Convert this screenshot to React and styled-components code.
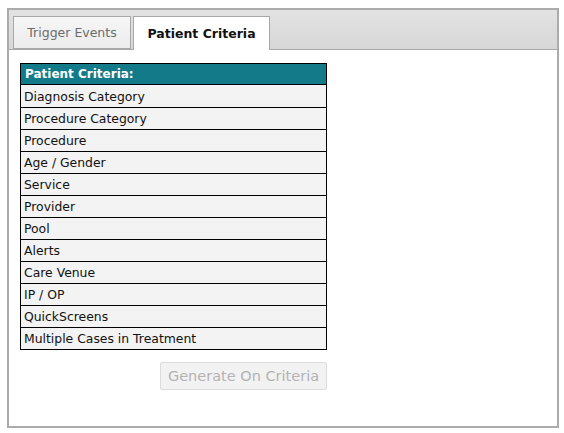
import React from "react";
import styled, { createGlobalStyle } from "styled-components";

const Global = createGlobalStyle`
  body {
    margin: 0;
    background: #fff;
    font-family: "DejaVu Sans", Verdana, sans-serif;
  }
`;

const Frame = styled.div`
  margin: 8px 0 0 7px;
  width: 548px;
  height: 416px;
  border: 2px solid #ababab;
  background: #fff;
  display: flex;
  flex-direction: column;
`;

const TabStrip = styled.div`
  height: 40px;
  box-sizing: border-box;
  padding: 0 0 0 4px;
  display: flex;
  align-items: flex-end;
  gap: 2px;
  background: linear-gradient(#e2e2e2, #d7d7d7);
  border-bottom: 1px solid #a8a8a8;
`;

const Tab = styled.div`
  height: ${(p) => (p.$active ? "34px" : "33px")};
  margin-bottom: ${(p) => (p.$active ? "-1px" : "0")};
  box-sizing: border-box;
  display: flex;
  align-items: center;
  justify-content: center;
  white-space: nowrap;
  border: 1px solid #a8a8a8;
  border-bottom: ${(p) => (p.$active ? "none" : "1px solid #a8a8a8")};
  background: ${(p) => (p.$active ? "#fff" : "linear-gradient(#f6f6f6, #ececec)")};
  color: ${(p) => (p.$active ? "#111" : "#6b6b6b")};
  font-family: "DejaVu Sans", Verdana, sans-serif;
  font-size: 12.5px;
  font-weight: ${(p) => (p.$active ? "bold" : "normal")};
  width: ${(p) => p.$w}px;
`;

const Body = styled.div`
  padding: 13px 0 0 11px;
  display: flex;
  flex-direction: column;
`;

const Table = styled.div`
  width: 307px;
  box-sizing: border-box;
  border: 1px solid #000;
  display: flex;
  flex-direction: column;
`;

const HeadCell = styled.div`
  height: 21px;
  box-sizing: border-box;
  padding: 0 4px;
  display: flex;
  align-items: center;
  background: #127a88;
  color: #fff;
  font-weight: bold;
  font-size: 12px;
  border-bottom: 1px solid #000;
`;

const Row = styled.div`
  height: 22px;
  box-sizing: border-box;
  padding: 0 3px;
  display: flex;
  align-items: center;
  background: #f3f3f3;
  color: #111;
  font-size: 12.4px;
  border-top: ${(p) => (p.$first ? "none" : "1px solid #000")};
`;

const Actions = styled.div`
  width: 307px;
  display: flex;
  justify-content: flex-end;
  padding-top: 12px;
`;

const Button = styled.button`
  width: 167px;
  height: 28px;
  box-sizing: border-box;
  border: 1px solid #dcdcdc;
  border-radius: 2px;
  background: #f2f2f2;
  color: #b3b3b3;
  font-family: "DejaVu Sans", Verdana, sans-serif;
  font-size: 14.5px;
  padding: 0;
`;

const items = [
  "Diagnosis Category",
  "Procedure Category",
  "Procedure",
  "Age / Gender",
  "Service",
  "Provider",
  "Pool",
  "Alerts",
  "Care Venue",
  "IP / OP",
  "QuickScreens",
  "Multiple Cases in Treatment",
];

export default function App() {
  return (
    <>
      <Global />
      <Frame>
        <TabStrip>
          <Tab $w={118}>Trigger Events</Tab>
          <Tab $active $w={137}>Patient Criteria</Tab>
        </TabStrip>
        <Body>
          <Table>
            <HeadCell>Patient Criteria:</HeadCell>
            {items.map((it, i) => (
              <Row key={it} $first={i === 0}>{it}</Row>
            ))}
          </Table>
          <Actions>
            <Button disabled>Generate On Criteria</Button>
          </Actions>
        </Body>
      </Frame>
    </>
  );
}
